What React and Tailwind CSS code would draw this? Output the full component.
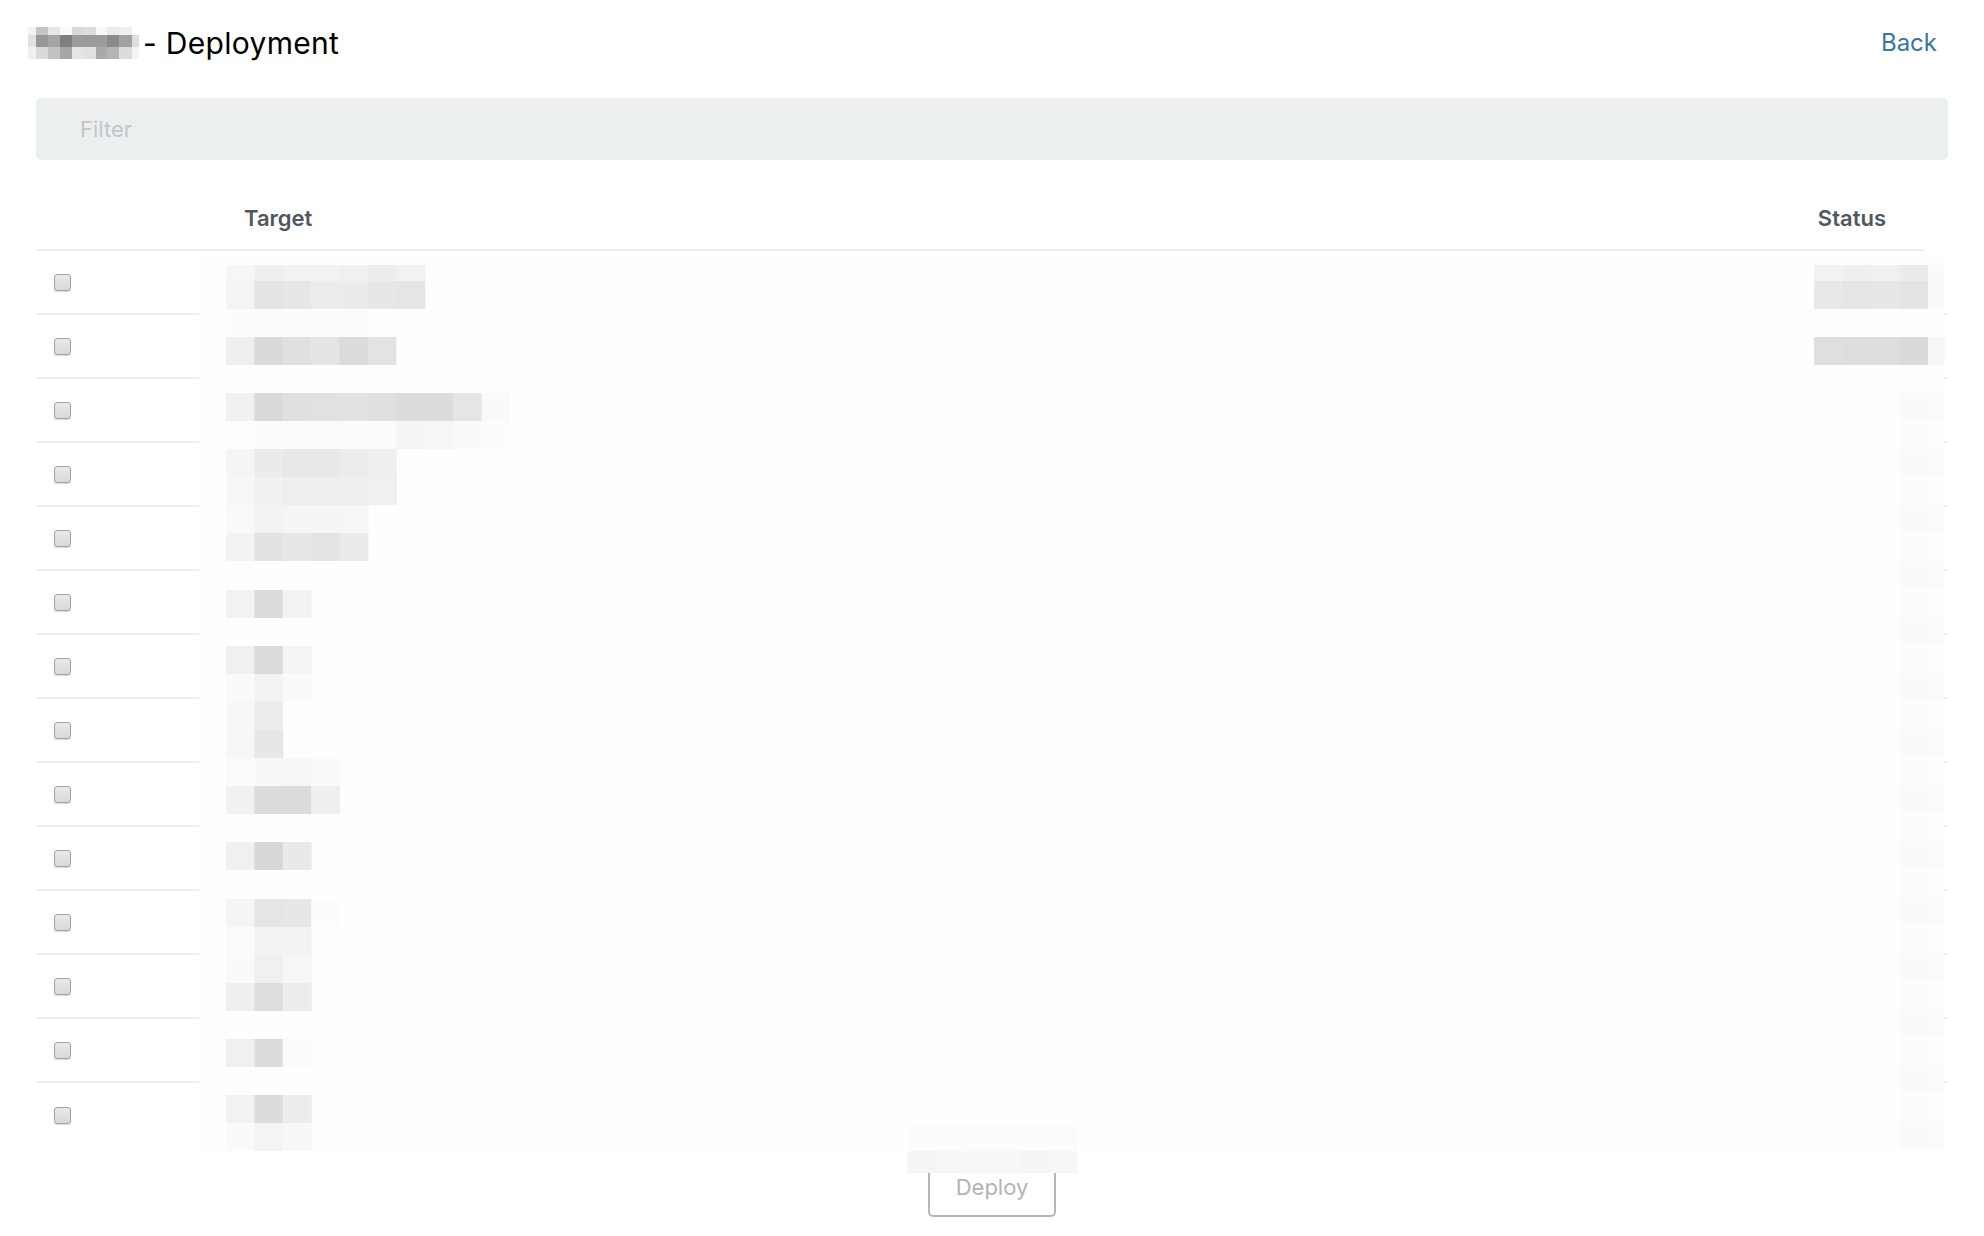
import React from "react";

const COLX = Array.from({ length: 11 }, (_, i) => 226 + i * 28.4);

const TARGET = [
  [265, 16, ["#f6f6f6", "#eef0ef", "#f2f2f2", "#f1f2f2", "#eff0f1", "#eceeed", "#f1f2f2"]],
  [281, 28, ["#f4f4f4", "#e3e4e5", "#e6e7e8", "#ebeceb", "#eaebea", "#e6e7e6", "#e4e5e6"]],
  [309, 28, ["#fcfcfc", "#fcfcfc", "#fcfcfc", "#fcfcfc", "#fcfcfc"]],
  [337, 28, ["#eeeff0", "#d9dadc", "#dfe0e1", "#e3e4e3", "#dadbdd", "#e2e3e4", "#fdfdfd"]],
  [393, 28, ["#f1f1f1", "#d9dadc", "#dfe0e0", "#e0e1e0", "#e1e2e3", "#dfe0e1", "#dbdcde", "#dbdcde", "#e4e5e4", "#fafafa"]],
  [421, 28, ["#fdfdfd", "#fafbfb", "#fafbfb", "#fafbfb", "#fafbfb", "#fafbfb", "#f5f5f5", "#f5f6f6", "#f9fafa", "#fcfcfc"]],
  [449, 28, ["#f5f5f5", "#eaebea", "#e7e8e8", "#e7e8e7", "#ebecec", "#eeeff0"]],
  [477, 28, ["#f7f7f7", "#f0f1f1", "#edeeef", "#edeeef", "#eeeff0", "#eff0f0"]],
  [505, 28, ["#f9f9f9", "#f2f3f5", "#f4f5f5", "#f4f5f5", "#f6f6f6"]],
  [533, 28, ["#f2f3f3", "#e1e2e2", "#e6e7e8", "#e2e3e4", "#e9eaea"]],
  [590, 28, ["#f2f2f2", "#dadbdd", "#f2f2f2"]],
  [646, 28, ["#eff0f0", "#dadbdc", "#f4f4f4"]],
  [674, 28, ["#fafafa", "#f3f3f3", "#fafafa"]],
  [702, 28, ["#f7f7f7", "#ebecee", "#fdfdfd"]],
  [730, 28, ["#f6f7f7", "#e6e7e8"]],
  [758, 28, ["#fbfbfb", "#f7f8f8", "#f6f7f7", "#fafafa"]],
  [786, 28, ["#f0f1f1", "#dbdcdd", "#dbdcdd", "#eef0ef"]],
  [842, 28, ["#f0f0f0", "#d6d7d9", "#e8e9eb"]],
  [899, 28, ["#f5f5f5", "#e4e5e6", "#e6e7e8", "#fcfcfc"]],
  [927, 28, ["#fafbfb", "#f2f3f3", "#f2f2f2"]],
  [955, 28, ["#fafafa", "#eff0f1", "#f6f6f6"]],
  [983, 28, ["#eef0ef", "#dcdddf", "#eceeed"]],
  [1039, 28, ["#eff1f0", "#dbdcde", "#fbfbfb"]],
  [1095, 28, ["#f2f2f2", "#dbdcde", "#ecedef"]],
  [1123, 28, ["#fafafa", "#f3f4f4", "#f8f8f8"]],
];

const STATX = [1814, 1842.5, 1871, 1899.5, 1928, 1944];
const STATUS = [
  [265, 16, ["#f1f2f2", "#eeeff0", "#eff0f0", "#eaebec", "#fafafa"]],
  [281, 28, ["#e7e8e9", "#e4e5e6", "#e6e7e8", "#e3e4e4", "#f9f9f9"]],
  [337, 28, ["#dedfdf", "#dcdddf", "#dcdddf", "#d9dadc", "#f6f6f6"]],
];

// faint alternating cells down the status column
const STATUS_FAINT = [];
for (let y = 393; y + 28 <= 1151; y += 28) {
  const alt = ((y - 393) / 28) % 2 === 0;
  STATUS_FAINT.push([y, 28, [alt ? "#fafafa" : "#fcfcfc", alt ? "#fbfbfb" : "#fdfdfd"]]);
}
const STATFX = [1899.5, 1928, 1944];

const DEPX = [907, 935.5, 964, 992.5, 1021, 1049, 1077];
const DEPLOY = [
  [1123, 28, ["#fcfcfc", "#fcfcfc", "#fcfcfc", "#fcfcfc", "#fcfcfc", "#fcfcfc"]],
  [1151, 22, ["#f5f5f5", "#f6f6f6", "#f7f7f7", "#f7f7f7", "#f5f5f5", "#f6f6f6"]],
];

const TITLEX = [0, 8, 20, 32, 44, 56, 68, 79, 91, 104, 111];
const TITLE = [
  [0, 8, ["#f2f2f2", "#c4c4c4", "#e6e6e6", "#fafafa", "#d9d9d9", "#dcdcdc", "#f8f8f8", "#ebebeb", "#efefef", "#ffffff"]],
  [8, 12, ["#e2e2e2", "#979797", "#a4a4a4", "#7f7f7f", "#9b9b9b", "#9a9a9a", "#9c9c9c", "#8a8a8a", "#a2a2a2", "#dedede"]],
  [20, 12, ["#f0f0f0", "#dadada", "#c2c2c2", "#a7a7a7", "#e5e5e5", "#e1e1e1", "#a9a9a9", "#b4b4b4", "#dcdcdc", "#f4f4f4"]],
];

function cells(rows, xs, keyPrefix) {
  const out = [];
  rows.forEach(([y, h, colors], ri) => {
    colors.forEach((c, ci) => {
      out.push(
        <rect
          key={`${keyPrefix}-${ri}-${ci}`}
          x={xs[ci]}
          y={y}
          width={xs[ci + 1] - xs[ci] + 0.5}
          height={h}
          fill={c}
        />
      );
    });
  });
  return out;
}

function Checkbox() {
  return (
    <span className="block w-[17px] h-[17px] rounded-[3px] border border-[#a3a3a3] bg-gradient-to-b from-[#e9e9e9] to-[#d8d8d8] shadow-[0_1px_1px_rgba(0,0,0,0.15)]" />
  );
}

export default function App() {
  const rows = Array.from({ length: 14 }, (_, i) => i);
  return (
    <div
      className="relative w-full min-h-[1236px] bg-white"
      style={{ fontFamily: "Inter, 'Noto Sans', 'Liberation Sans', sans-serif" }}
    >
      <div className="px-[36px]">
        {/* Header */}
        <div className="h-[86px] flex items-center justify-between">
          <div className="flex items-center ml-[-8px]">
            <svg width="111" height="33" viewBox="0 0 111 33" className="block">
              {cells(TITLE, TITLEX, "t")}
            </svg>
            <span className="ml-[4px] text-[30px] leading-none text-black tracking-[0.3px]">
              - Deployment
            </span>
          </div>
          <a className="mr-[11px] text-[24px] leading-none text-[#3876a1] cursor-pointer">Back</a>
        </div>

        {/* Filter */}
        <div className="mt-[12px] h-[62px] rounded-[5px] bg-[#ebeff0] flex items-center pl-[44px]">
          <span className="text-[22px] text-[#c2c6c8]">Filter</span>
        </div>

        {/* Table */}
        <div className="mt-[27px]">
          <div className="mr-[24px] h-[64px] border-b-2 border-[#eceff0] flex items-center justify-between">
            <span className="ml-[208px] text-[22px] font-semibold text-[#51585d]">Target</span>
            <span className="mr-[38px] text-[22px] font-semibold text-[#51585d]">Status</span>
          </div>
          {rows.map((i) => (
            <div
              key={i}
              className={`h-[64px] flex items-center pl-[18px] ${
                i < rows.length - 1 ? "border-b-2 border-[#eceff0]" : ""
              }`}
            >
              <Checkbox />
            </div>
          ))}
        </div>

        {/* Deploy */}
        <div className="mt-[10px] flex justify-center">
          <button className="w-[128px] h-[60px] rounded-[5px] border-2 border-[#b6b6b6] bg-white text-[22px] text-[#b3b3b3]">
            Deploy
          </button>
        </div>
      </div>

      {/* Redaction mosaic overlay */}
      <svg
        className="absolute top-0 left-0 pointer-events-none"
        width="1984"
        height="1236"
        viewBox="0 0 1984 1236"
      >
        <rect x="199" y="253" width="1745" height="898" fill="#fefefe" />
        {cells(STATUS_FAINT, STATFX, "f")}
        {cells(TARGET, COLX, "c")}
        {cells(STATUS, STATX, "s")}
        {cells(DEPLOY, DEPX, "d")}
      </svg>
    </div>
  );
}
